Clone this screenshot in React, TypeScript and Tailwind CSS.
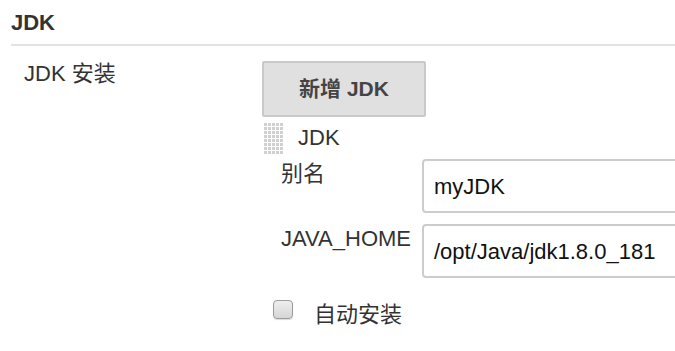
import React from "react";

function Grip() {
  const dots: JSX.Element[] = [];
  for (let r = 0; r < 8; r++) {
    for (let c = 0; c < 5; c++) {
      dots.push(<rect key={`${r}-${c}`} x={c * 4} y={r * 4} width={3} height={3} fill="#d0d0d0" />);
    }
  }
  return (
    <svg width="20" height="32" viewBox="0 0 20 32" className="block shrink-0">
      {dots}
    </svg>
  );
}

export default function App() {
  return (
    <div className="w-[675px] h-[351px] overflow-hidden bg-white text-[#333] font-['Liberation_Sans','Noto_Sans_CJK_SC',sans-serif]">
      <div className="pl-[11px]">
        <div className="pt-[10px] text-[22px] leading-[26px] font-bold">JDK</div>
        <div className="mt-[8px] h-[2px] bg-[#e2e2e2]"></div>
        <div className="flex pt-[15px]">
          <div className="w-[252px] shrink-0 pl-[13px] text-[22px] leading-[26px]">JDK 安装</div>
          <div className="flex-1 min-w-0">
            <div className="w-[164px] h-[56px] flex items-center justify-center bg-[#e0e0e0] border-2 border-[#c9c9c9] rounded-[2px] text-[21px] font-bold text-[#444] -ml-[1px]">
              新增 JDK
            </div>
            <div className="flex mt-[6px] pl-[1px]">
              <Grip />
              <div className="ml-[14px] mt-[2px] text-[22px] leading-[26px]">JDK</div>
            </div>
            <div className="mt-[4px]">
              <div className="flex">
                <div className="w-[159px] shrink-0 pl-[18px] pt-[2px] text-[22px] leading-[26px]">别名</div>
                <div className="w-[320px] shrink-0 h-[54px] border-2 border-[#cccccc] rounded-[4px] pl-[10px] flex items-center text-[22px] text-[#111]">
                  myJDK
                </div>
              </div>
              <div className="flex mt-[11px]">
                <div className="w-[159px] shrink-0 pl-[18px] pt-[2px] text-[22px] leading-[26px]">JAVA_HOME</div>
                <div className="w-[320px] shrink-0 h-[54px] border-2 border-[#cccccc] rounded-[4px] pl-[10px] flex items-center text-[22px] text-[#111]">
                  /opt/Java/jdk1.8.0_181
                </div>
              </div>
              <div className="flex items-start mt-[22px] pl-[10px]">
                <span className="block w-[20px] h-[19px] rounded-[4px] border border-[#9c9c9c] bg-gradient-to-b from-[#eeeeee] to-[#d6d6d6] shadow-[0_1px_1px_rgba(0,0,0,0.15)]"></span>
                <div className="ml-[21px] mt-[2px] text-[22px] leading-[26px]">自动安装</div>
              </div>
            </div>
          </div>
        </div>
      </div>
    </div>
  );
}
